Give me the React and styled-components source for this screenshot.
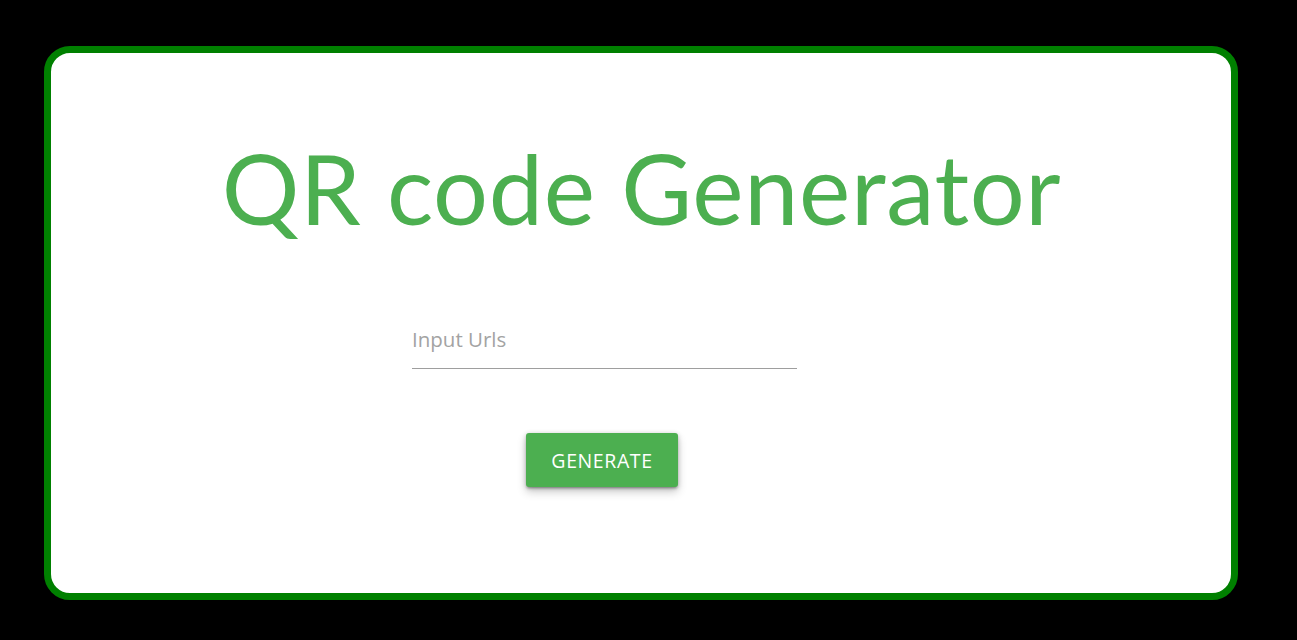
import React from "react";
import styled, { createGlobalStyle } from "styled-components";

const Global = createGlobalStyle`
  html, body { margin: 0; padding: 0; background: #000; }
  body { font-family: "Open Sans", "Noto Sans", sans-serif; }
  * { box-sizing: border-box; }
`;

const Page = styled.div`
  padding: 46px 0 40px 44px;
  background: #000;
  min-height: 640px;
`;

const Card = styled.div`
  width: 1194px;
  height: 554px;
  background: #fff;
  border: 7px solid #008000;
  border-radius: 26px;
  display: flex;
  flex-direction: column;
  align-items: center;
  padding-top: 86px;
`;

const Title = styled.h1`
  margin: 0 0 0 1px;
  font-family: "Lato", sans-serif;
  font-weight: 400;
  font-size: 97px;
  line-height: 1;
  color: #4caf50;
  letter-spacing: 0.7px;
`;

const Form = styled.div`
  align-self: flex-start;
  margin-left: 361px;
  margin-top: 85px;
  display: flex;
  flex-direction: column;
  width: 385px;
`;

const Input = styled.input`
  border: none;
  border-bottom: 1px solid #9e9e9e;
  outline: none;
  height: 48px;
  padding: 0 0 12px 0;
  font-family: "Open Sans", sans-serif;
  font-size: 20.5px;
  color: #333;
  background: transparent;
  &::placeholder { color: #a3a3a3; }
`;

const Button = styled.button`
  align-self: flex-start;
  margin-left: 114px;
  margin-top: 64px;
  width: 152px;
  height: 54px;
  padding: 0;
  border: none;
  border-radius: 3px;
  background: #4caf50;
  color: #fff;
  font-family: "Open Sans", sans-serif;
  font-size: 19.5px;
  letter-spacing: 0.6px;
  text-transform: uppercase;
  box-shadow: 0 2px 2px 0 rgba(0,0,0,0.14), 0 3px 1px -2px rgba(0,0,0,0.12), 0 1px 5px 0 rgba(0,0,0,0.2), 0 5px 10px rgba(0,0,0,0.2);
  cursor: pointer;
`;

export default function App() {
  return (
    <Page>
      <Global />
      <Card>
        <Title>QR code Generator</Title>
        <Form>
          <Input placeholder="Input Urls" />
          <Button>Generate</Button>
        </Form>
      </Card>
    </Page>
  );
}
